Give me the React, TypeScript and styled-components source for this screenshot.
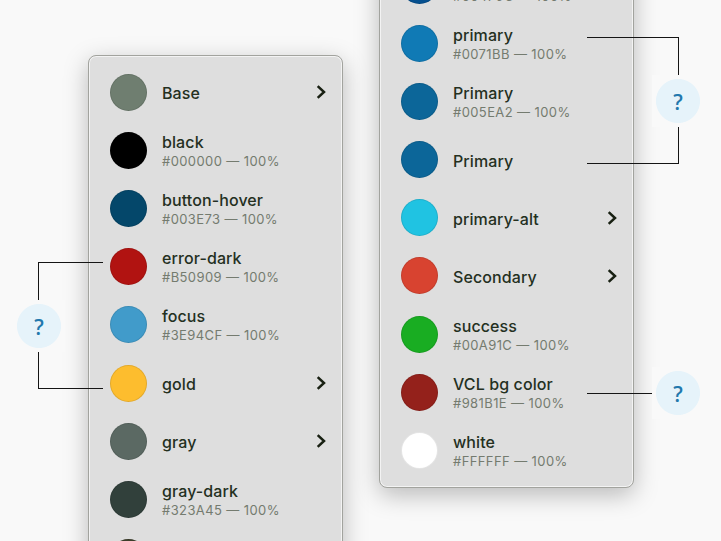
import React from "react";
import styled, { createGlobalStyle } from "styled-components";

interface Swatch {
    name: string;
    color: string;
    hex?: string;
    nested?: boolean;
}

const leftSwatches: Swatch[] = [
    { name: "Base", color: "#6f7e70", nested: true },
    { name: "black", color: "#000000", hex: "#000000" },
    { name: "button-hover", color: "#04476a", hex: "#003E73" },
    { name: "error-dark", color: "#b11311", hex: "#B50909" },
    { name: "focus", color: "#419bca", hex: "#3E94CF" },
    { name: "gold", color: "#fdbd2e", nested: true },
    { name: "gray", color: "#5b6963", nested: true },
    { name: "gray-dark", color: "#31403b", hex: "#323A45" },
    { name: "", color: "#3e3f2c" },
];

const rightSwatches: Swatch[] = [
    { name: "link", color: "#06508f", hex: "#004F9C" },
    { name: "primary", color: "#107ab5", hex: "#0071BB" },
    { name: "Primary", color: "#0c6699", hex: "#005EA2" },
    { name: "Primary", color: "#0c6699" },
    { name: "primary-alt", color: "#20c3e2", nested: true },
    { name: "Secondary", color: "#d84330", nested: true },
    { name: "success", color: "#19ad22", hex: "#00A91C" },
    { name: "VCL bg color", color: "#94211b", hex: "#981B1E" },
    { name: "white", color: "#ffffff", hex: "#FFFFFF" },
];

function SwatchRow({ swatch }: { swatch: Swatch }) {
    return (
        <Row>
            <Dot $color={swatch.color} />
            <Label $single={!swatch.hex}>
                <Name>{swatch.name}</Name>
                {swatch.hex && <Hex>{swatch.hex} — 100%</Hex>}
            </Label>
            {swatch.nested && (
                <Chevron viewBox="0 0 10 16">
                    <path d="M1.7 2.2 8 8l-6.3 5.8" />
                </Chevron>
            )}
        </Row>
    );
}

function SwatchPanel({ swatches }: { swatches: Swatch[] }) {
    return (
        <Panel>
            {swatches.map((swatch, i) => (
                <SwatchRow key={i} swatch={swatch} />
            ))}
        </Panel>
    );
}

function App() {
    return (
        <Stage>
            <GlobalStyle />
            <LeftColumn>
                <SwatchPanel swatches={leftSwatches} />
            </LeftColumn>
            <RightColumn>
                <SwatchPanel swatches={rightSwatches} />
            </RightColumn>

            <Bracket $x={38} $y={262} $width={65} $side="left" />
            <Bracket $x={587} $y={37} $width={92} $side="right" />
            <Line />
            <Badge $x={39} $y={326}>?</Badge>
            <Badge $x={678} $y={101}>?</Badge>
            <Badge $x={678} $y={393}>?</Badge>
        </Stage>
    );
}

export default App;

const GlobalStyle = createGlobalStyle`
    body {
        margin: 0;
        background: #f9f9f9;
    }
    * {
        box-sizing: border-box;
    }
`;

const Stage = styled.div`
    position: relative;
    display: flex;
    gap: 36px;
    width: 721px;
    height: 541px;
    padding-left: 88px;
    overflow: hidden;
    background: #f9f9f9;
    font-family: Inter, "Liberation Sans", sans-serif;
`;

const LeftColumn = styled.div`
    display: flex;
    flex-direction: column;
    padding-top: 55px;
`;

const RightColumn = styled.div`
    display: flex;
    flex-direction: column;
    justify-content: flex-end;
    padding-bottom: 53px;
`;

const Panel = styled.div`
    flex: none;
    width: 255px;
    padding: 7px 16px 7.4px 21px;
    border: 1px solid #a2a39e;
    border-radius: 8px;
    background: #dedede;
    box-shadow: inset 0 0 0 1px #f3f3f3, 0 7px 24px rgba(0, 0, 0, 0.26);
`;

const Row = styled.div`
    display: flex;
    align-items: center;
    height: 58.2px;
`;

const Dot = styled.div<{ $color: string }>`
    flex: none;
    width: 37px;
    height: 37px;
    border: 1px solid rgba(0, 0, 0, 0.1);
    border-radius: 50%;
    background: ${(p) => p.$color};
`;

const Label = styled.div<{ $single: boolean }>`
    flex: 1;
    margin-left: 15px;
    padding-top: ${(p) => (p.$single ? 2 : 1)}px;
    white-space: nowrap;
`;

const Name = styled.div`
    color: #24301f;
    font-size: 16px;
    font-weight: 500;
    letter-spacing: 0.1px;
    line-height: 20px;
`;

const Hex = styled.div`
    color: #747b6f;
    font-size: 13px;
    letter-spacing: 0.4px;
    line-height: 18px;
`;

const Chevron = styled.svg`
    width: 10px;
    height: 16px;
    fill: none;
    stroke: #182012;
    stroke-width: 2.5;
`;

const Bracket = styled.div<{ $x: number; $y: number; $width: number; $side: "left" | "right" }>`
    position: absolute;
    left: ${(p) => p.$x}px;
    top: ${(p) => p.$y}px;
    width: ${(p) => p.$width}px;
    height: 127px;
    border: 1px solid #151515;
    border-${(p) => (p.$side === "left" ? "right" : "left")}: 0;
`;

const Line = styled.div`
    position: absolute;
    left: 587px;
    top: 393px;
    width: 66px;
    height: 1px;
    background: #151515;
`;

// The square page-coloured edge keeps the lines clear of the circle
const Badge = styled.div<{ $x: number; $y: number }>`
    position: absolute;
    left: ${(p) => p.$x - 26}px;
    top: ${(p) => p.$y - 26}px;
    display: flex;
    align-items: center;
    justify-content: center;
    width: 52px;
    height: 52px;
    padding-top: 2px;
    background: radial-gradient(circle, #e6f3fa 21.6px, #f9f9f9 22.4px);
    color: #2378ad;
    font-family: "Open Sans", "Noto Sans", sans-serif;
    font-size: 21px;
    font-weight: 600;
    line-height: 26px;
`;
